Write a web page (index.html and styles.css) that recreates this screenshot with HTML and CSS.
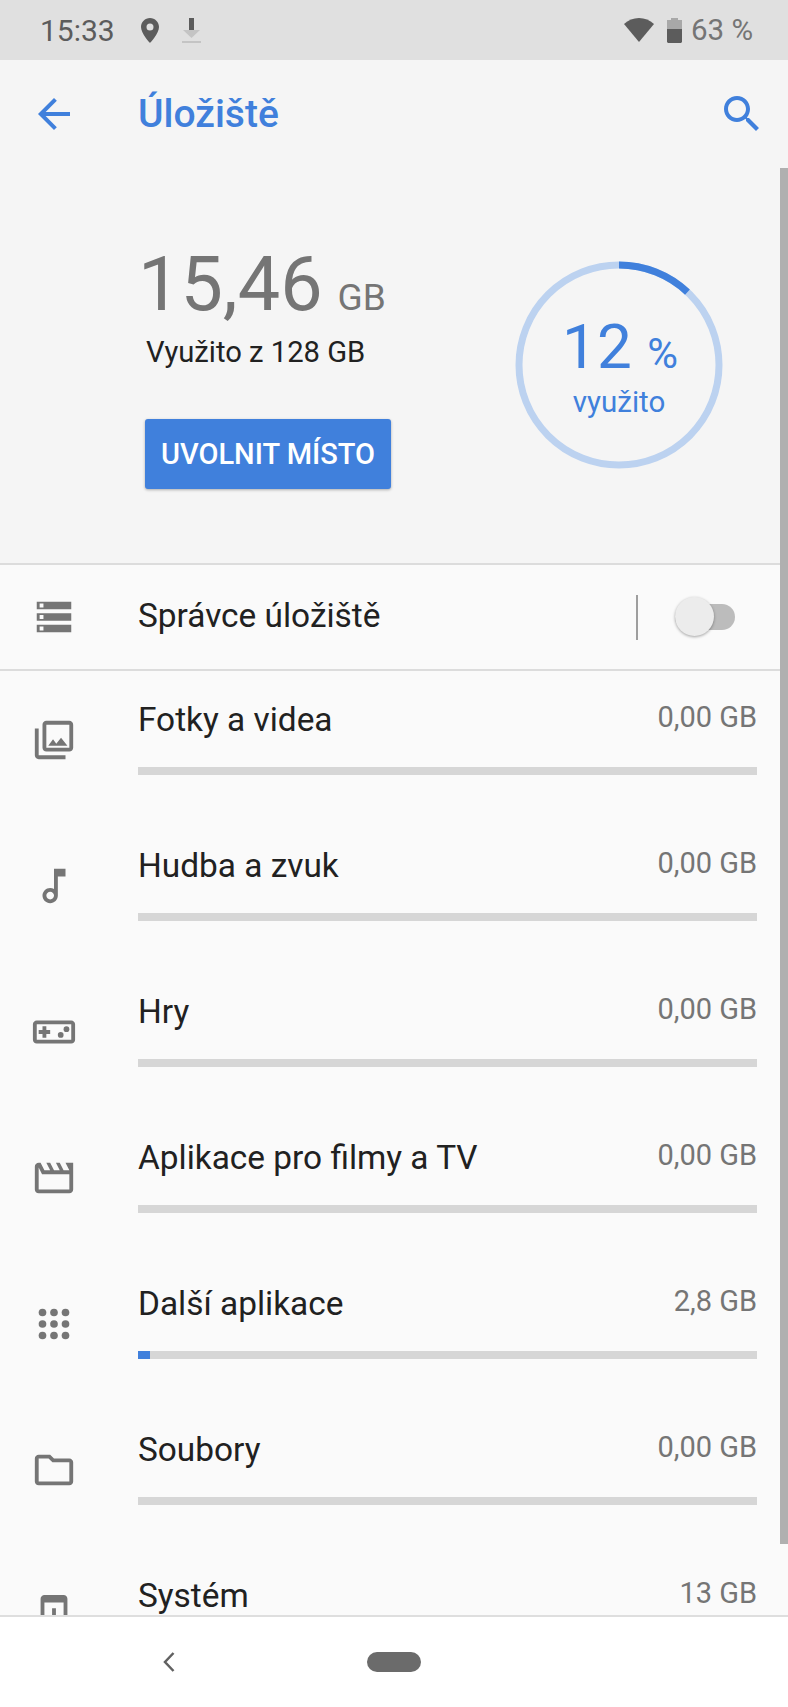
FILE: index.html
```html
<!DOCTYPE html>
<html lang="cs">
<head>
    <meta charset="UTF-8">
    <meta name="viewport" content="width=device-width, initial-scale=1.0">
    <title>Úložiště</title>
    <link rel="stylesheet" href="styles.css">
</head>
<body>
    <div class="status-bar">
        <span class="status-time">15:33</span>
        <svg class="status-pin" viewBox="0 0 18 25"><path d="M9 0C4 0 0 4 0 9c0 6.500 9 16 9 16s9-9.500 9-16c0-5-4-9-9-9zm0 12.500a3.500 3.500 0 1 1 0-7 3.500 3.500 0 0 1 0 7z"/></svg>
        <svg class="status-download" viewBox="0 0 19 25"><path class="dim" d="M1 12h17l-8.500 8zM0 23h19v2H0z"/><path d="M7 0h5v12H7z"/></svg>
        <span class="status-spacer"></span>
        <svg class="status-wifi" viewBox="0 0 30 24"><path d="M15 24L0 6c8-8 22-8 30 0z"/></svg>
        <svg class="status-battery" viewBox="0 0 15 25"><path class="half" d="M4 0h7v2h4v10H0V2h4z"/><path d="M0 11h15v13l-1 1H1l-1-1z"/></svg>
        <span class="status-battery-text">63 %</span>
    </div>

    <main class="screen">
        <header class="app-bar">
            <svg class="bar-icon" viewBox="0 0 24 24"><path d="M20 11H7.830l5.590-5.590L12 4l-8 8 8 8 1.410-1.410L7.830 13H20v-2z"/></svg>
            <h1 class="app-title">Úložiště</h1>
            <svg class="bar-icon search" viewBox="0 0 24 24"><path d="M15.500 14h-.79l-.28-.27C15.410 12.590 16 11.110 16 9.500 16 5.910 13.090 3 9.500 3S3 5.910 3 9.500 5.910 16 9.500 16c1.610 0 3.090-.59 4.230-1.570l.27.28v.79l5 4.990L20.490 19l-4.990-5zm-6 0C7.010 14 5 11.990 5 9.500S7.010 5 9.500 5 14 7.010 14 9.500 11.990 14 9.500 14z"/></svg>
        </header>

        <section class="hero">
            <div class="hero-left">
                <div class="used"><span class="used-num">15,46</span> <span class="used-unit">GB</span></div>
                <div class="used-of">Využito z 128 GB</div>
                <button class="free-btn" type="button">UVOLNIT MÍSTO</button>
            </div>
            <div class="ring">
                <svg class="ring-svg" viewBox="0 0 208 208">
                    <circle class="ring-track" cx="104" cy="104" r="100"/>
                    <circle class="ring-fill" cx="104" cy="104" r="100" pathLength="100" stroke-dasharray="12 88" transform="rotate(-90 104 104)"/>
                </svg>
                <div class="ring-text">
                    <div class="ring-num">12 <span class="ring-pct">%</span></div>
                    <div class="ring-label">využito</div>
                </div>
            </div>
        </section>

        <div class="manager">
            <svg class="row-icon" viewBox="0 0 24 24"><path d="M3 20h18v-4H3v4zm1.500-3h2v2h-2v-2zM3 4v4h18V4H3zm3.500 3h-2V5h2v2zM3 14h18v-4H3v4zm1.500-3h2v2h-2v-2z"/></svg>
            <span class="manager-title">Správce úložiště</span>
            <span class="manager-sep"></span>
            <span class="toggle"><span class="toggle-thumb"></span></span>
        </div>

        <ul class="list">
            <li class="row">
                <svg class="row-icon" viewBox="0 0 24 24"><path d="M20 4v12H8V4h12m0-2H8c-1.100 0-2 .9-2 2v12c0 1.100.9 2 2 2h12c1.100 0 2-.9 2-2V4c0-1.100-.9-2-2-2zm-8.500 9.670l1.690 2.260 2.480-3.100L19 15H9zM2 6v14c0 1.100.9 2 2 2h14v-2H4V6H2z"/></svg>
                <div class="row-body">
                    <div class="row-head"><span class="row-title">Fotky a videa</span><span class="row-size">0,00 GB</span></div>
                    <div class="bar"></div>
                </div>
            </li>
            <li class="row">
                <svg class="row-icon" viewBox="0 0 24 24"><path d="M12 3l.01 10.550c-.59-.34-1.270-.55-2-.55C7.790 13 6 14.790 6 17s1.790 4 4.010 4S14 19.210 14 17V7h4V3h-6zm-1.990 16c-1.100 0-2-.9-2-2s.9-2 2-2 2 .9 2 2-.9 2-2 2z"/></svg>
                <div class="row-body">
                    <div class="row-head"><span class="row-title">Hudba a zvuk</span><span class="row-size">0,00 GB</span></div>
                    <div class="bar"></div>
                </div>
            </li>
            <li class="row">
                <svg class="row-icon" viewBox="0 0 24 24"><path d="M21 6H3c-1.100 0-2 .9-2 2v8c0 1.100.9 2 2 2h18c1.100 0 2-.9 2-2V8c0-1.100-.9-2-2-2zm0 10H3V8h18v8zM6 15h2v-2h2v-2H8V9H6v2H4v2h2z"/><circle cx="15.500" cy="13.500" r="1.500"/><circle cx="18.500" cy="10.500" r="1.500"/></svg>
                <div class="row-body">
                    <div class="row-head"><span class="row-title">Hry</span><span class="row-size">0,00 GB</span></div>
                    <div class="bar"></div>
                </div>
            </li>
            <li class="row">
                <svg class="row-icon" viewBox="0 0 24 24"><path d="M4 6.470L5.760 10H20v8H4V6.470M22 4h-4l2 4h-3l-2-4h-2l2 4h-3l-2-4H8l2 4H7L5 4H4c-1.100 0-1.990.9-1.990 2L2 18c0 1.100.9 2 2 2h16c1.100 0 2-.9 2-2V4z"/></svg>
                <div class="row-body">
                    <div class="row-head"><span class="row-title">Aplikace pro filmy a TV</span><span class="row-size">0,00 GB</span></div>
                    <div class="bar"></div>
                </div>
            </li>
            <li class="row">
                <svg class="row-icon" viewBox="0 0 24 24"><circle cx="6" cy="6" r="2"/><circle cx="12" cy="6" r="2"/><circle cx="18" cy="6" r="2"/><circle cx="6" cy="12" r="2"/><circle cx="12" cy="12" r="2"/><circle cx="18" cy="12" r="2"/><circle cx="6" cy="18" r="2"/><circle cx="12" cy="18" r="2"/><circle cx="18" cy="18" r="2"/></svg>
                <div class="row-body">
                    <div class="row-head"><span class="row-title">Další aplikace</span><span class="row-size">2,8 GB</span></div>
                    <div class="bar"><div class="bar-fill" style="width: 2%"></div></div>
                </div>
            </li>
            <li class="row">
                <svg class="row-icon" viewBox="0 0 24 24"><path d="M9.170 6l2 2H20v10H4V6h5.170M10 4H4c-1.100 0-1.990.9-1.990 2L2 18c0 1.100.9 2 2 2h16c1.100 0 2-.9 2-2V8c0-1.100-.9-2-2-2h-8l-2-2z"/></svg>
                <div class="row-body">
                    <div class="row-head"><span class="row-title">Soubory</span><span class="row-size">0,00 GB</span></div>
                    <div class="bar"></div>
                </div>
            </li>
            <li class="row">
                <svg class="row-icon" viewBox="0 0 24 24"><path d="M17 1.010L7 1c-1.100 0-2 .9-2 2v18c0 1.100.9 2 2 2h10c1.100 0 2-.9 2-2V3c0-1.100-.9-1.990-2-1.990zM17 19H7V5h10v14zm-1-6h-3V8h-2v5H8l4 4 4-4z"/></svg>
                <div class="row-body">
                    <div class="row-head"><span class="row-title">Systém</span><span class="row-size">13 GB</span></div>
                    <div class="bar"></div>
                </div>
            </li>
        </ul>

        <div class="scrollbar"></div>
    </main>

    <nav class="nav-bar">
        <svg class="nav-back" viewBox="0 0 12 20"><path d="M10.500 1L2 10l8.500 9" fill="none"/></svg>
        <span class="nav-home"></span>
    </nav>
</body>
</html>
```

FILE: styles.css
```css
* {
    box-sizing: border-box;
}

body {
    display: flex;
    flex-direction: column;
    width: 788px;
    height: 1707px;
    margin: 0;
    overflow: hidden;
    background-color: #fafafa;
    font-family: 'Roboto', sans-serif;
    color: #212121;
}

/* status bar */
.status-bar {
    display: flex;
    align-items: center;
    flex: none;
    height: 60px;
    padding: 0 35px 0 41px;
    background-color: #e0e0e0;
    font-size: 30px;
}

.status-time {
    margin-left: -1px;
    color: #5c5c5c;
}

.status-pin {
    width: 18px;
    height: 25px;
    margin-left: 26px;
    fill: #5c5c5c;
}

.status-download {
    width: 19px;
    height: 25px;
    margin-left: 23px;
    fill: #5c5c5c;
}

.status-download .dim {
    fill: #c4c4c4;
}

.status-spacer {
    flex: 1;
}

.status-wifi {
    width: 30px;
    height: 24px;
    fill: #5c5c5c;
}

.status-battery {
    width: 15px;
    height: 25px;
    margin-left: 13px;
    fill: #5c5c5c;
}

.status-battery .half {
    fill: #a8a8a8;
}

.status-battery-text {
    margin-left: 9px;
    font-size: 29.500px;
    color: #757575;
}

/* app */
.screen {
    position: relative;
    flex: 1;
    min-height: 0;
    overflow: hidden;
}

.app-bar {
    display: flex;
    align-items: center;
    height: 108px;
    padding: 0 22px 0 30px;
    background-color: #f5f5f5;
}

.bar-icon {
    flex: none;
    width: 48px;
    height: 48px;
    fill: #4080dc;
}

.app-title {
    flex: 1;
    margin: 0 0 0 60px;
    font-size: 39px;
    font-weight: 500;
    color: #4080dc;
}

.hero {
    display: flex;
    justify-content: space-between;
    height: 395px;
    padding: 0 65px 0 145px;
    background-color: #f5f5f5;
}

.hero-left {
    display: flex;
    flex-direction: column;
    align-items: flex-start;
    padding-top: 71px;
}

.used {
    margin-left: -7px;
    line-height: 90px;
    white-space: nowrap;
    color: #757575;
}

.used-num {
    font-size: 75.500px;
}

.used-unit {
    margin-left: 11px;
    font-size: 37px;
}

.used-of {
    margin-top: -16px;
    margin-left: 1px;
    font-size: 29.200px;
    line-height: 36px;
}

.free-btn {
    width: 246px;
    height: 70px;
    margin-top: 49px;
    padding: 0;
    border: none;
    border-radius: 3px;
    background-color: #4080dc;
    box-shadow: 0 1px 3px rgba(0, 0, 0, 0.3);
    font-family: inherit;
    font-size: 29px;
    font-weight: 500;
    color: #ffffff;
}

.ring {
    display: grid;
    width: 208px;
    height: 208px;
    margin-top: 93px;
}

.ring-svg,
.ring-text {
    grid-area: 1 / 1;
}

.ring-svg {
    width: 208px;
    height: 208px;
}

.ring-track,
.ring-fill {
    fill: none;
    stroke-width: 7px;
}

.ring-track {
    stroke: #bcd2f0;
}

.ring-fill {
    stroke: #4080dc;
}

.ring-text {
    padding-top: 48px;
    text-align: center;
    color: #4080dc;
}

.ring-num {
    padding-left: 2px;
    font-size: 62px;
    line-height: 76px;
}

.ring-pct {
    font-size: 42px;
}

.ring-label {
    margin-top: -7px;
    font-size: 29.500px;
    line-height: 34px;
}

/* storage manager row */
.manager {
    display: flex;
    align-items: center;
    height: 108px;
    border-top: 2px solid #dcdcdc;
    border-bottom: 2px solid #dcdcdc;
}

.row-icon {
    flex: none;
    width: 46px;
    height: 46px;
    margin: 0 61px 0 31px;
    fill: #757575;
}

.manager-title {
    flex: 1;
    margin-top: -3px;
    font-size: 33.400px;
}

.manager-sep {
    width: 2px;
    height: 45px;
    margin-right: 37px;
    background-color: #9e9e9e;
}

.toggle {
    position: relative;
    width: 60px;
    height: 26px;
    margin-right: 53px;
    border-radius: 13px;
    background-color: #bcbcbc;
}

.toggle-thumb {
    position: absolute;
    top: -7px;
    left: 0;
    width: 39px;
    height: 39px;
    border-radius: 50%;
    background-color: #ececec;
    box-shadow: 0 1px 3px rgba(0, 0, 0, 0.35);
}

/* list */
.list {
    margin: 0;
    padding: 0;
    list-style: none;
}

.row {
    display: flex;
    height: 146px;
}

.row .row-icon {
    margin-top: 46px;
}

.row-body {
    flex: none;
    width: 619px;
}

.row-head {
    display: flex;
    justify-content: space-between;
    height: 96px;
    padding-top: 26px;
}

.row-title {
    font-size: 33.400px;
    line-height: 45px;
}

.row-size {
    font-size: 29px;
    line-height: 40px;
    color: #757575;
}

.bar {
    height: 8px;
    background-color: #d6d6d6;
}

.bar-fill {
    height: 100%;
    background-color: #4080dc;
}

.scrollbar {
    position: absolute;
    top: 108px;
    right: 0;
    width: 8px;
    height: 1376px;
    background-color: #b0b0b0;
}

/* nav bar */
.nav-bar {
    position: relative;
    display: flex;
    align-items: center;
    justify-content: center;
    flex: none;
    height: 92px;
    border-top: 2px solid #dedede;
    background-color: #ffffff;
}

.nav-back {
    position: absolute;
    top: 35px;
    left: 163px;
    width: 12px;
    height: 20px;
    stroke: #616161;
    stroke-width: 2.500px;
}

.nav-home {
    width: 54px;
    height: 20px;
    border-radius: 10px;
    background-color: #6b6b6b;
}
```
